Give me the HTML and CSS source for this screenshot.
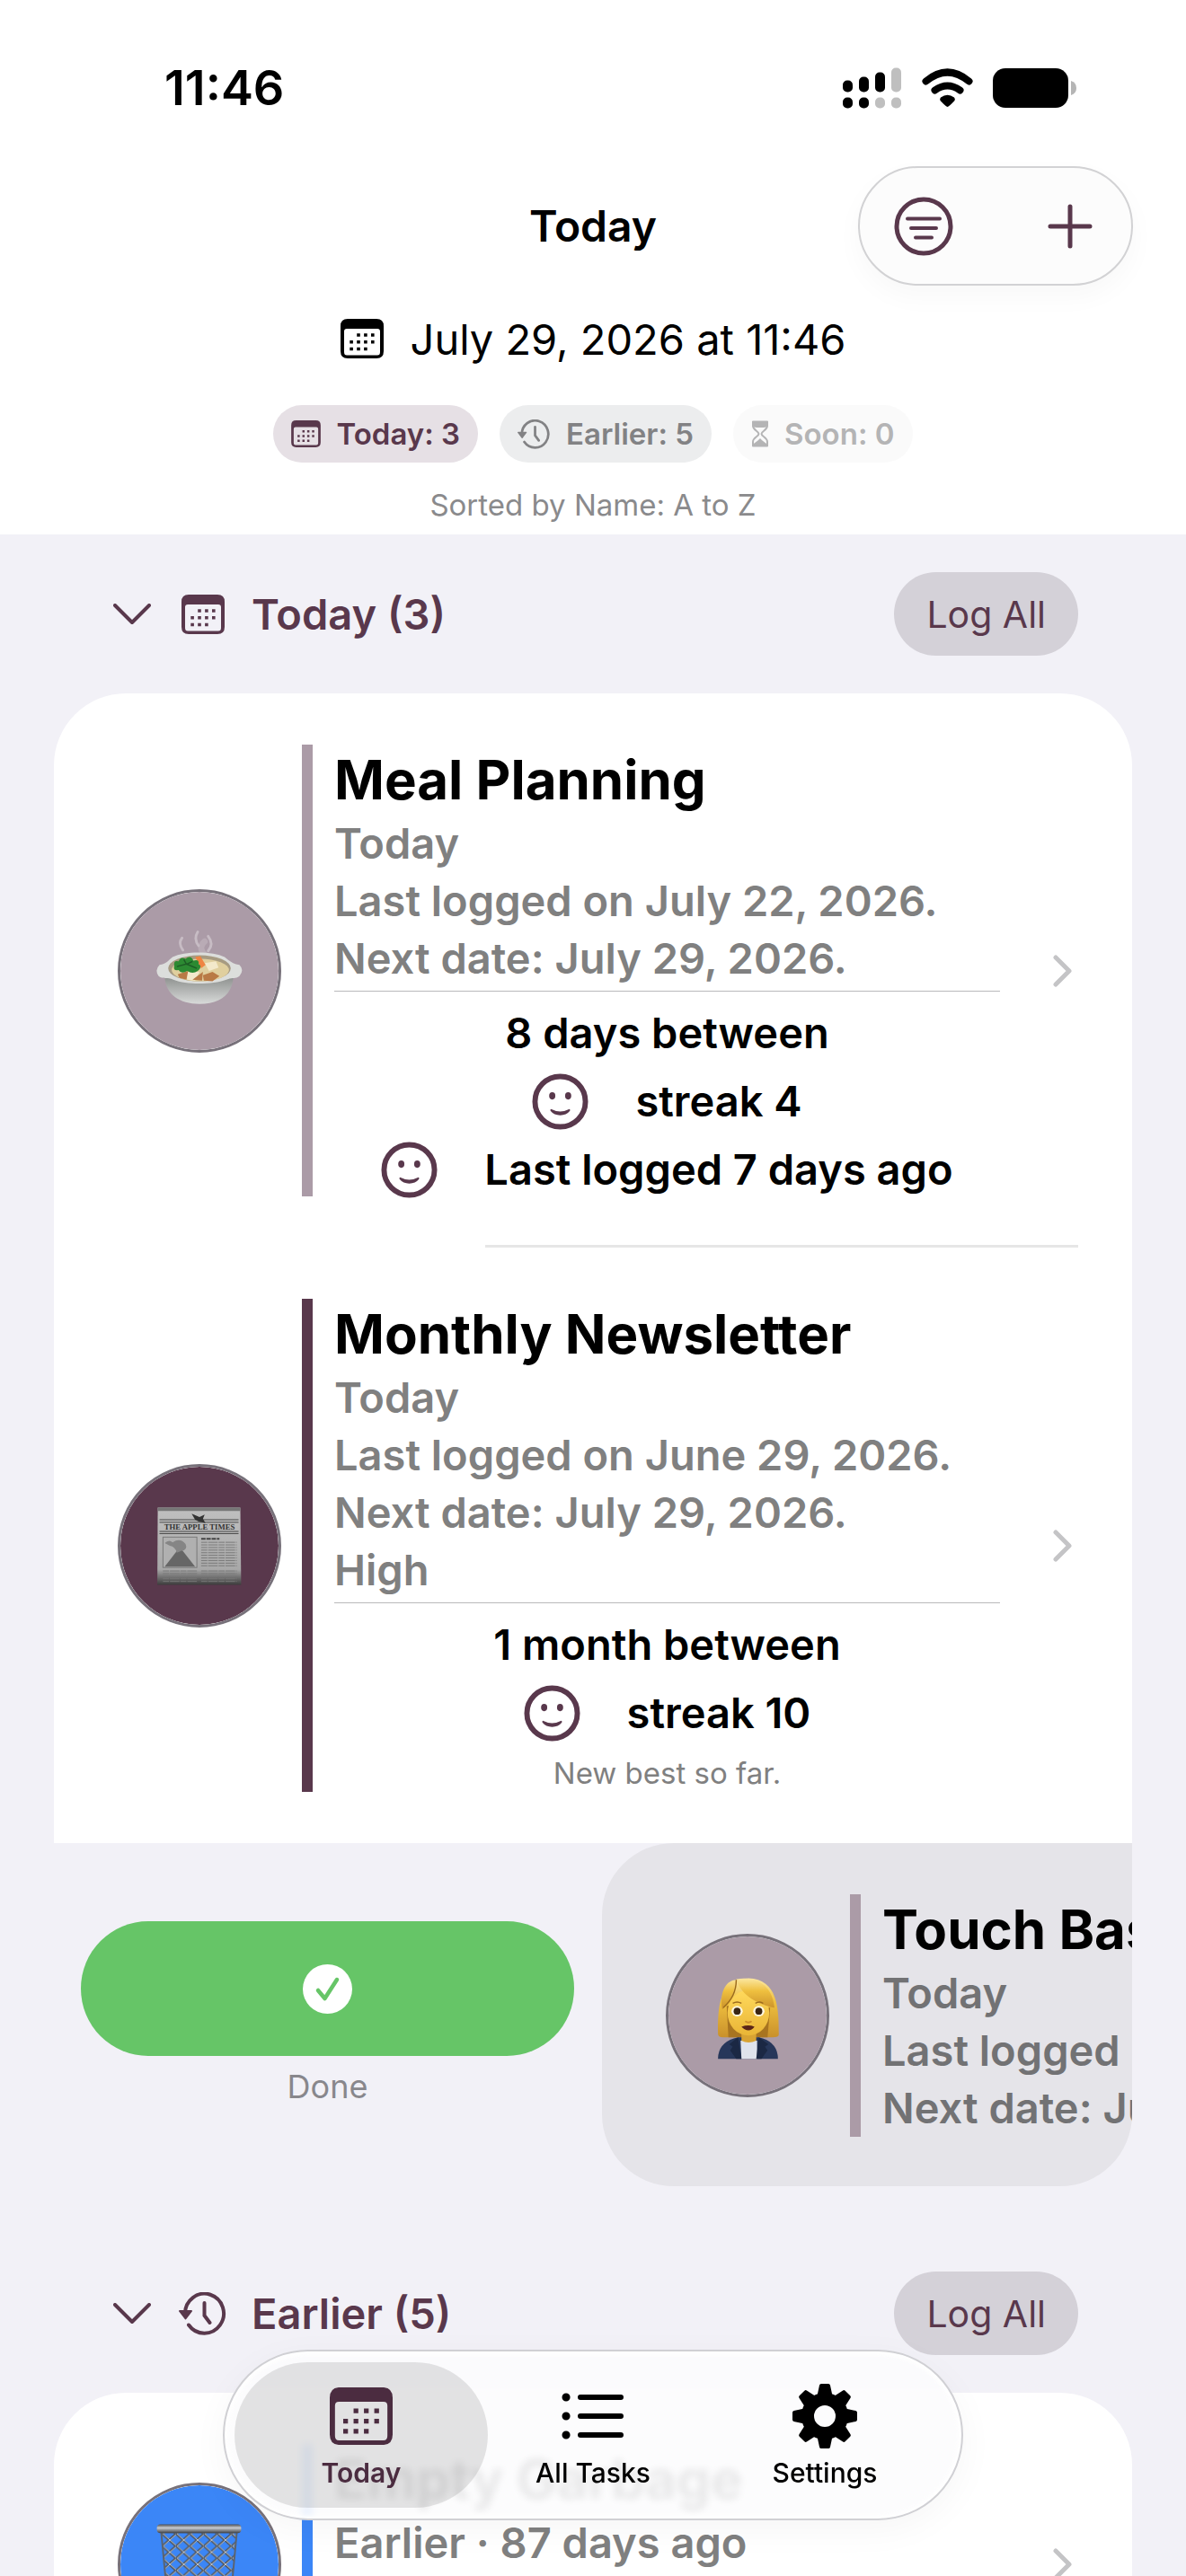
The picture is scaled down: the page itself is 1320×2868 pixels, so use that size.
FILE: index.html
```html
<!DOCTYPE html>
<html lang="en">

<head>
    <meta charset="utf-8">
    <meta name="viewport" content="width=device-width, initial-scale=1">
    <title>Today</title>
    <link rel="stylesheet" href="styles.css">
</head>

<body>
    <!-- shared icons -->
    <svg class="sprite" width="0" height="0">
        <symbol id="calendar" viewBox="0 0 48 44">
            <path fill="currentColor" fill-rule="evenodd" d="M8 0H40Q48 0 48 8V36Q48 44 40 44H8Q0 44 0 36V8Q0 0 8 0ZM7 11Q4 11 4 14V37Q4 40.500 7 40.500H41Q44 40.500 44 37V14Q44 11 41 11Z" />
            <path stroke="currentColor" stroke-width="3.6" stroke-dasharray="3.6 4.300" fill="none" d="M18.200 18H38M10.300 25.800H38M10.300 33.500H30" />
        </symbol>
        <symbol id="history" viewBox="0 0 54 48">
            <path fill="none" stroke="currentColor" stroke-width="4" stroke-linecap="round" d="M7 24A21.500 22 0 1 1 11 36.500M28.500 12V26L34.500 34" />
            <path fill="currentColor" stroke="currentColor" stroke-width="2" stroke-linejoin="round" d="M1 21H14L7.500 29.500Z" />
        </symbol>
        <symbol id="hourglass" viewBox="0 0 20 30">
            <path fill="none" stroke="currentColor" stroke-width="2" stroke-linejoin="round" d="M2 1.500H18V6C18 11 11.500 12 11.500 15S18 19 18 24V28.500H2V24C2 19 8.500 18 8.500 15S2 11 2 6Z" />
            <path fill="currentColor" d="M1 1H19V6Q17 8 14 8H6Q3 8 1 6ZM2 28.500C2 25 7 24 10 20C13 24 18 25 18 28.500Z" />
        </symbol>
        <symbol id="smile" viewBox="0 0 64 64">
            <circle cx="32" cy="32" r="28.500" fill="none" stroke="currentColor" stroke-width="6" />
            <ellipse cx="23" cy="25.500" rx="3.500" ry="4.200" fill="currentColor" />
            <ellipse cx="41" cy="25.500" rx="3.500" ry="4.200" fill="currentColor" />
            <path fill="currentColor" d="M21.500 40.500Q32 46 42.500 40.500Q43.500 41 43 42.500Q39 47.500 32 47.500T21 42.500Q20.500 41 21.500 40.500Z" />
        </symbol>
        <symbol id="down" viewBox="0 0 42 24">
            <path fill="none" stroke="currentColor" stroke-width="4" stroke-linecap="round" stroke-linejoin="round" d="M2 2L21 21L40 2" />
        </symbol>
        <symbol id="right" viewBox="0 0 22 36">
            <path fill="none" stroke="currentColor" stroke-width="5" stroke-linecap="round" stroke-linejoin="round" d="M3 3L18 18L3 33" />
        </symbol>
    </svg>

    <div class="app">
        <header class="top">
            <div class="status">
                <span class="time">11:46</span>
                <div class="status-icons">
                    <svg width="66" height="46" viewBox="0 0 66 46">
                        <g>
                            <rect y="14.500" width="11" height="13" rx="5" />
                            <rect x="18" y="10.500" width="11" height="17" rx="5" />
                            <rect x="36" y="5.500" width="11" height="22" rx="5" />
                            <rect y="33.500" width="11" height="12" rx="5" />
                            <rect x="18" y="33.500" width="11" height="12" rx="5" />
                        </g>
                        <g fill="#bfbfbf">
                            <rect x="54" y="0.500" width="11" height="27" rx="5" />
                            <rect x="36" y="33.500" width="11" height="12" rx="5" />
                            <rect x="54" y="33.500" width="11" height="12" rx="5" />
                        </g>
                    </svg>
                    <svg width="57" height="44" viewBox="0 0 57 44">
                        <path d="M28.500 43Q27 43 20.500 36Q19.500 34 21 32.500Q28.500 27 36 32.500Q37.500 34 36.500 36Q30 43 28.500 43Z" />
                        <path fill="none" stroke="#000" stroke-width="8" stroke-linecap="round" d="M14.500 24.500Q28.500 14.500 42.500 24.500" />
                        <path fill="none" stroke="#000" stroke-width="8" stroke-linecap="round" d="M4.500 14.500Q28.500 -5.500 52.500 14.500" />
                    </svg>
                    <svg width="93" height="44" viewBox="0 0 93 44">
                        <rect width="84" height="44" rx="14" />
                        <path fill="#b5b5b5" d="M87 14Q93 16 93 22T87 30Z" />
                    </svg>
                </div>
            </div>

            <div class="nav">
                <h1>Today</h1>
                <div class="tools">
                    <button type="button" aria-label="Filter">
                        <svg width="66" height="66" viewBox="0 0 66 66" fill="none" stroke="currentColor" stroke-width="5">
                            <circle cx="33" cy="33" r="30" />
                            <path stroke-width="4" stroke-linecap="round" d="M15 24.500H51M19 35H47M24 45.500H42" />
                        </svg>
                    </button>
                    <button type="button" aria-label="Add">
                        <svg width="50" height="50" viewBox="0 0 50 50" fill="none" stroke="currentColor" stroke-width="5" stroke-linecap="round">
                            <path d="M25 3V47M3 25H47" />
                        </svg>
                    </button>
                </div>
            </div>

            <div class="date">
                <svg class="cal"><use href="#calendar" /></svg>
                <span>July 29, 2026 at 11:46</span>
            </div>

            <div class="chips">
                <button type="button" class="chip active"><svg class="chip-cal"><use href="#calendar" /></svg>Today: 3</button>
                <button type="button" class="chip"><svg class="chip-history"><use href="#history" /></svg>Earlier: 5</button>
                <button type="button" class="chip empty"><svg class="chip-glass"><use href="#hourglass" /></svg>Soon: 0</button>
            </div>
            <p class="sorted">Sorted by Name: A to Z</p>
        </header>

        <main>
            <section>
                <div class="section-head">
                    <button type="button" class="toggle">
                        <svg class="down"><use href="#down" /></svg>
                        <span class="slot"><svg class="cal"><use href="#calendar" /></svg></span>
                        <span>Today (3)</span>
                    </button>
                    <button type="button" class="log">Log All</button>
                </div>

                <div class="list">
                    <a class="task" href="#">
                        <svg class="avatar" viewBox="0 0 182 182">
                            <defs>
                                <linearGradient id="bowl" x2="0" y2="1">
                                    <stop offset="0" stop-color="#8e918f" />
                                    <stop offset="1" stop-color="#d8dad9" />
                                </linearGradient>
                            </defs>
                            <circle cx="91" cy="91" r="91" fill="#ab9ba7" />
                            <g fill="none" stroke="#e4dde2" stroke-linecap="round" opacity=".5">
                                <path stroke-width="3" d="M72 67Q66 59 71 53M90 62Q84 54 89 46M101 68Q108 60 101 51" />
                                <path stroke-width="7" opacity=".5" d="M97 72Q89 64 97 57" />
                            </g>
                            <path fill="url(#bowl)" d="M51 98H130C129 118 114 129 91 129S52 118 51 98Z" />
                            <path fill="#dcdedc" d="M60 75C74 68 106 68 120 75C125 79 129 83 137 84Q143 90 137 97C132 101 128 98 122 101C105 107 76 107 61 101C54 98 49 101 44 97Q39 90 45 84C53 83 55 79 60 75Z" />
                            <ellipse cx="91" cy="88" rx="36" ry="15" fill="#a79b82" />
                            <ellipse cx="92" cy="90" rx="33" ry="13" fill="#e0cf9e" />
                            <path fill="#f3e9cb" d="M97 82L110 80L113 87L102 91ZM76 92L91 92L86 102L77 101Z" />
                            <path fill="#b97a45" d="M66 95L78 91L76 101L68 99ZM83 101L95 92L94 102ZM95 96L106 92L114 97L106 103L96 102Z" />
                            <path fill="#ef8442" d="M86 75L92 74L98 84L93 88Z" />
                            <path fill="#2c8a32" d="M62 85Q61 78 67 80Q69 74 75 77Q81 72 84 79Q91 77 90 83Q95 86 89 91Q83 95 77 91Q70 95 67 90Q60 91 62 85Z" />
                            <path fill="none" stroke="#1d5c25" stroke-width="1.500" d="M65 86L76 83L88 88M76 83L73 78M77 83L83 80" />
                        </svg>
                        <span class="bar"></span>
                        <div class="info">
                            <h3>Meal Planning</h3>
                            <p>Today</p>
                            <p>Last logged on July 22, 2026.</p>
                            <p>Next date: July 29, 2026.</p>
                            <div class="stats">
                                <div class="stat">8 days between</div>
                                <div class="stat"><svg class="smile"><use href="#smile" /></svg>streak 4</div>
                                <div class="stat"><svg class="smile"><use href="#smile" /></svg>Last logged 7 days ago</div>
                            </div>
                        </div>
                        <svg class="go"><use href="#right" /></svg>
                    </a>
                    <hr class="separator">
                    <a class="task high" href="#">
                        <svg class="avatar" viewBox="0 0 182 182">
                            <defs>
                                <linearGradient id="paper" x2="0" y2="1">
                                    <stop offset="0" stop-color="#c0c0c0" />
                                    <stop offset=".8" stop-color="#a8a8a8" />
                                    <stop offset="1" stop-color="#3c3c3c" />
                                </linearGradient>
                            </defs>
                            <circle cx="91" cy="91" r="91" fill="#59384c" />
                            <path fill="url(#paper)" d="M43 47H138L139 136H42.500Z" />
                            <path fill="#777" d="M43 47H138V51H43Z" />
                            <path stroke="#444" d="M45 61H136M45 64H136M45 74.500H136M45 77H136" />
                            <path fill="#333" d="M82 54L91 58L97 55L95 60L98 65L90 63L86 61Z" />
                            <text class="masthead" x="91" y="72" text-anchor="middle">THE APPLE TIMES</text>
                            <rect x="49" y="81" width="39" height="35" fill="#b0b0b0" stroke="#777" />
                            <path fill="#666" d="M51 115L65 97L71 96L86 115Z" />
                            <path fill="#858585" d="M51 88Q56 83 60 87Q69 81 75 89Q78 96 70 97L65 99Q63 92 57 91Z" />
                            <path stroke="#787878" stroke-dasharray="7 1 11 1" d="M93 87H134M93 90H134M93 93H134M93 96H134M93 99H134M93 102H134M93 105H134M93 108H134M93 111H134M93 114H134M49 120H88M93 120H134M49 123H88M93 123H134M49 126H88M93 126H134M49 129H88M93 129H134M49 132H88M93 132H134" />
                            <path stroke="#444" stroke-width="2" stroke-dasharray="5 1" d="M93 83H114" />
                        </svg>
                        <span class="bar"></span>
                        <div class="info">
                            <h3>Monthly Newsletter</h3>
                            <p>Today</p>
                            <p>Last logged on June 29, 2026.</p>
                            <p>Next date: July 29, 2026.</p>
                            <p>High</p>
                            <div class="stats">
                                <div class="stat">1 month between</div>
                                <div class="stat"><svg class="smile"><use href="#smile" /></svg>streak 10</div>
                                <div class="note">New best so far.</div>
                            </div>
                        </div>
                        <svg class="go"><use href="#right" /></svg>
                    </a>
                </div>

                <!-- swiped row with its action -->
                <div class="swipe">
                    <div class="action">
                        <button type="button" class="done" aria-labelledby="done-label">
                            <svg width="55" height="55" viewBox="0 0 55 55">
                                <circle cx="27.500" cy="27.500" r="27.500" fill="#fff" />
                                <path fill="none" stroke="#66c567" stroke-width="4.500" stroke-linecap="round" stroke-linejoin="round" d="M17 29L24.500 38L38 17" />
                            </svg>
                        </button>
                        <span id="done-label">Done</span>
                    </div>
                    <a class="task swiped" href="#">
                        <svg class="avatar" viewBox="0 0 182 182">
                            <defs>
                                <linearGradient id="hair" x2="0" y2="1">
                                    <stop offset="0" stop-color="#fbe7a0" />
                                    <stop offset=".4" stop-color="#efc03f" />
                                    <stop offset="1" stop-color="#c9902b" />
                                </linearGradient>
                                <linearGradient id="face" x2="0" y2="1">
                                    <stop offset="0" stop-color="#ffd95c" />
                                    <stop offset="1" stop-color="#e9b536" />
                                </linearGradient>
                            </defs>
                            <circle cx="91" cy="91" r="91" fill="#ab9ba7" />
                            <path fill="url(#hair)" d="M57 112C57 83 57 49 92 48C126 49 127 83 127 113Q127 116 120 116H65Q57 117 57 112Z" />
                            <path fill="#a87420" d="M67 80L69 116H114L117 82Z" />
                            <path fill="#27375a" d="M57 141Q57 121 80 116H104Q126 121 126 141Z" />
                            <path fill="#dfe3ec" d="M83 120H102V141H84Z" />
                            <path fill="#d8a333" d="M84 108H101V120Q92 124 84 120Z" />
                            <path fill="#1b2844" d="M80 116L84 141H78L71 131L74 127L70 124ZM104 116L101 141H107L114 131L111 127L115 124Z" />
                            <ellipse cx="92" cy="88" rx="24" ry="26" fill="url(#face)" />
                            <path fill="url(#hair)" d="M78 50C76 66 70 76 62 84C58 62 68 50 78 50ZM78 49C108 45 120 62 122 82C104 78 84 69 78 49Z" />
                            <path fill="none" stroke="#9c6b1d" stroke-width="1.500" d="M78 50C78 65 70 76 63 82M74 77Q79 74 84 77M100 77Q105 74 109 77" />
                            <ellipse cx="79" cy="86" rx="6.500" ry="6" fill="#fff7e0" />
                            <ellipse cx="104" cy="86" rx="6.500" ry="6" fill="#fff7e0" />
                            <circle cx="79" cy="86" r="4" fill="#3a2614" />
                            <circle cx="104" cy="86" r="4" fill="#3a2614" />
                            <path fill="none" stroke="#cc8f2d" stroke-width="2" stroke-linecap="round" d="M89 98Q92 100 95 98" />
                            <path fill="#5a2418" d="M84 104Q92 101 99 104Q96 108 92 108T84 104Z" />
                        </svg>
                        <span class="bar"></span>
                        <div class="info">
                            <h3>Touch Base</h3>
                            <p>Today</p>
                            <p>Last logged</p>
                            <p>Next date: July</p>
                        </div>
                    </a>
                </div>
            </section>

            <section>
                <div class="section-head">
                    <button type="button" class="toggle">
                        <svg class="down"><use href="#down" /></svg>
                        <span class="slot"><svg class="history"><use href="#history" /></svg></span>
                        <span>Earlier (5)</span>
                    </button>
                    <button type="button" class="log">Log All</button>
                </div>
                <div class="list">
                    <a class="task blue" href="#">
                        <svg class="avatar" viewBox="0 0 182 182">
                            <defs>
                                <linearGradient id="rim" x2="0" y2="1">
                                    <stop offset="0" stop-color="#4d4f52" />
                                    <stop offset=".4" stop-color="#c7cbd0" />
                                    <stop offset="1" stop-color="#3d4045" />
                                </linearGradient>
                                <pattern id="mesh" width="16" height="14" patternUnits="userSpaceOnUse">
                                    <path fill="none" stroke="#4f5660" stroke-width="2.500" d="M-2 -2L18 16M18 -2L-2 16" />
                                    <path fill="none" stroke="#c3cad2" d="M-1 -2L18 15M18 -1L-1 16" />
                                </pattern>
                            </defs>
                            <circle cx="91" cy="91" r="91" fill="#3b86f7" />
                            <path fill="url(#mesh)" stroke="#5b636e" stroke-width="2" d="M47 54H134L126 140H55Z" />
                            <rect x="42" y="45" width="97" height="10" rx="4" fill="url(#rim)" />
                        </svg>
                        <span class="bar"></span>
                        <div class="info">
                            <h3>Empty Garbage</h3>
                            <p>Earlier · 87 days ago</p>
                        </div>
                        <svg class="go"><use href="#right" /></svg>
                    </a>
                </div>
            </section>
        </main>

        <nav class="tabs">
            <a class="tab current" href="#">
                <svg width="70" height="72" viewBox="0 -2 48 48"><use href="#calendar" width="48" height="44" /></svg>
                Today
            </a>
            <a class="tab" href="#">
                <svg width="70" height="72" viewBox="0 0 70 72">
                    <g stroke="currentColor" stroke-width="6" stroke-linecap="round">
                        <path d="M21 15H66M21 36H66M21 57H66" />
                        <path stroke-width="9" d="M5 15H5.100M5 36H5.100M5 57H5.100" />
                    </g>
                </svg>
                All Tasks
            </a>
            <a class="tab" href="#">
                <svg width="72" height="72" viewBox="0 0 72 72" fill="currentColor" stroke="currentColor" stroke-width="4" stroke-linejoin="round">
                    <path id="teeth" d="M32 2H40L43 16H29ZM32 70H40L43 56H29ZM2 32V40L16 43V29ZM70 32V40L56 43V29Z" />
                    <use href="#teeth" transform="rotate(45 36 36)" />
                    <circle cx="36" cy="36" r="19" fill="none" stroke-width="14" />
                </svg>
                Settings
            </a>
        </nav>
    </div>
</body>

</html>
```

FILE: styles.css
```css
* {
    box-sizing: border-box;
}

body {
    margin: 0;
    background: #f2f1f7;
    color: #000;
    font-family: Inter, "Liberation Sans", sans-serif;
    font-size: 47px;
}

h1, h3, p {
    margin: 0;
}

button {
    border: none;
    padding: 0;
    background: none;
    color: inherit;
    font: inherit;
    cursor: pointer;
}

a {
    color: inherit;
    text-decoration: none;
}

svg {
    display: block;
    flex: none;
}

.sprite {
    position: absolute;
}

.app {
    position: relative;
    height: 100vh;
    overflow: hidden;
}

/* header */
.top {
    background: #fff;
    padding-bottom: 12px;
}

.status {
    display: flex;
    align-items: center;
    justify-content: space-between;
    height: 185px;
    padding: 10px 122px 0 183px;
}

.time {
    font-size: 54px;
    font-weight: 600;
}

.status-icons {
    display: flex;
    align-items: center;
    gap: 22px;
}

.nav {
    display: grid;
    grid-template-columns: 1fr auto 1fr;
    align-items: center;
    height: 133px;
    padding: 0 59px;
}

.nav h1 {
    grid-column: 2;
    font-size: 48px;
    font-weight: 600;
}

.tools {
    justify-self: end;
    display: flex;
    align-items: center;
    justify-content: space-between;
    width: 306px;
    height: 133px;
    padding: 0 43px 0 38px;
    border: 2px solid #d2d2d4;
    border-radius: 67px;
    background: #fcfcfc;
    box-shadow: 0 12px 30px rgba(0, 0, 0, 0.03);
    color: #59384c;
}

.date {
    display: flex;
    align-items: center;
    justify-content: center;
    gap: 30px;
    height: 60px;
    margin-top: 29px;
}

.cal {
    width: 48px;
    height: 44px;
}

.chips {
    display: flex;
    justify-content: center;
    gap: 24px;
    margin-top: 44px;
}

.chip {
    display: flex;
    align-items: center;
    gap: 17px;
    height: 64px;
    padding: 0 20px;
    border-radius: 32px;
    background: #ecedee;
    color: #828284;
    font-size: 33px;
    font-weight: 600;
}

.chip.active {
    background: #e6e0e5;
    color: #59384c;
}

.chip.empty {
    background: #fafafa;
    color: #b4b4b5;
}

.chip-cal {
    width: 33px;
    height: 30px;
}

.chip-history {
    width: 37px;
    height: 33px;
}

.chip-glass {
    width: 20px;
    height: 30px;
}

.sorted {
    margin-top: 26px;
    color: #8a8a8c;
    font-size: 33px;
    line-height: 42px;
    text-align: center;
}

/* sections */
section {
    padding: 0 60px;
    margin-bottom: 53px;
}

.section-head {
    display: flex;
    align-items: center;
    justify-content: space-between;
    padding: 42px 60px 42px 66px;
}

.toggle {
    display: flex;
    align-items: center;
    color: #59384c;
    font-weight: 600;
}

.down {
    width: 42px;
    height: 24px;
}

.slot {
    display: flex;
    justify-content: center;
    width: 56px;
    margin: 0 26px 0 30px;
}

.history {
    width: 54px;
    height: 48px;
}

.log {
    height: 93px;
    padding: 0 36px;
    border-radius: 47px;
    background: #d4d1d8;
    color: #59384c;
    font-size: 41px;
}

.list {
    border-radius: 80px 80px 0 0;
    background: #fff;
}

.separator {
    height: 3px;
    margin: 0 60px 0 480px;
    border: none;
    background: #e6e6e6;
}

.task {
    display: flex;
    align-items: center;
    padding: 57px 66px 57px 71px;
}

.task:first-child {
    padding-bottom: 54px;
}

.avatar {
    width: 182px;
    height: 182px;
    border: 3px solid #77717a;
    border-radius: 50%;
}

.masthead {
    font: bold 9px "Liberation Serif", serif;
    fill: #333;
}

.bar {
    align-self: stretch;
    flex: none;
    width: 12px;
    margin: 0 24px 0 23px;
    background: #ab9ba7;
}

.high .bar {
    background: #59384c;
}

.blue .bar {
    background: #3b86f7;
}

.info {
    flex: 1;
    color: #808080;
    font-weight: 600;
    line-height: 64px;
    white-space: nowrap;
}

.info h3 {
    color: #000;
    font-size: 60px;
    font-weight: 700;
    line-height: 78px;
}

.stats {
    display: flex;
    flex-direction: column;
    align-items: center;
    gap: 16px;
    margin-top: 4px;
    padding-top: 16px;
    border-top: 1px solid #b9b9bb;
    color: #000;
}

.stat {
    display: flex;
    align-items: center;
    gap: 52px;
    height: 60px;
}

.smile {
    width: 63px;
    height: 63px;
    color: #59384c;
}

.note {
    color: #808080;
    font-size: 33px;
    font-weight: 400;
    line-height: 42px;
}

.go {
    width: 22px;
    height: 36px;
    margin-left: 59px;
    color: #c4c4c6;
}

/* swiped row */
.swipe {
    display: flex;
    align-items: stretch;
}

.action {
    flex: 1;
    display: flex;
    flex-direction: column;
    justify-content: center;
    align-items: center;
    gap: 10px;
    padding: 0 31px 0 30px;
    color: #88878c;
    font-size: 36px;
    line-height: 48px;
}

.done {
    display: flex;
    align-items: center;
    justify-content: center;
    width: 100%;
    height: 150px;
    border-radius: 75px;
    background: #66c567;
}

.task.swiped {
    flex: 0 0 590px;
    padding-right: 0;
    padding-bottom: 55px;
    overflow: hidden;
    border-radius: 80px 0 80px 80px;
    background: #e5e4e9;
}

.swiped .info {
    min-width: 0;
    color: #727274;
}

.blue .info {
    min-height: 268px;
}

/* floating tab bar */
.tabs {
    position: absolute;
    right: 248px;
    bottom: 62px;
    left: 248px;
    display: flex;
    padding: 12px 11px;
    border: 2px solid #d0d0d4;
    border-radius: 95px;
    background: rgba(252, 252, 253, 0.92);
    box-shadow: inset 0 0 4px 3px #fff, 0 10px 40px rgba(0, 0, 0, 0.04);
    backdrop-filter: blur(4px);
}

.tab {
    flex: 1;
    display: flex;
    flex-direction: column;
    align-items: center;
    gap: 6px;
    height: 162px;
    padding: 24px 0;
    border-radius: 81px;
    font-size: 30px;
    font-weight: 500;
    line-height: 42px;
}

.tab + .tab {
    margin-left: -24px;
}

.tab.current {
    background: rgba(0, 0, 0, 0.1);
    color: #4b2c40;
    font-weight: 600;
}
```
